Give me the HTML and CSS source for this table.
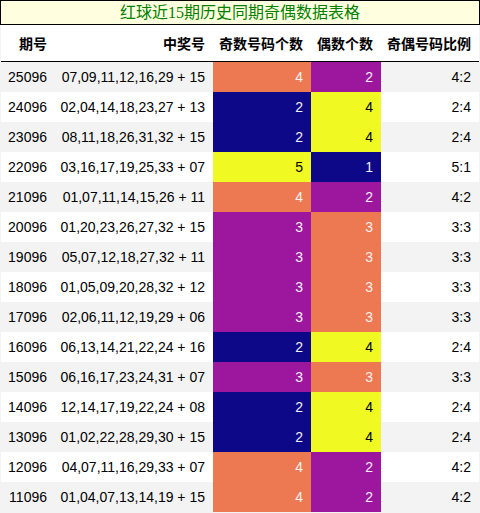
FILE: index.html
```html
<!DOCTYPE html>
<html lang="zh">
<head>
  <meta charset="UTF-8" />
  <title>红球近15期历史同期奇偶数据表格</title>
  <link rel="stylesheet" href="styles.css">
</head>
<body>
  <div class="caption">红球近15期历史同期奇偶数据表格</div>
  <table class="data">
    <thead>
      <tr>
        <th class="c-issue">期号</th>
        <th class="c-nums">中奖号</th>
        <th class="c-odd">奇数号码个数</th>
        <th class="c-even">偶数个数</th>
        <th class="c-ratio">奇偶号码比例</th>
      </tr>
    </thead>
    <tbody>
      <tr><td>25096</td><td>07,09,11,12,16,29 + 15</td><td class="orange">4</td><td class="purple">2</td><td>4:2</td></tr>
      <tr><td>24096</td><td>02,04,14,18,23,27 + 13</td><td class="navy">2</td><td class="yellow">4</td><td>2:4</td></tr>
      <tr><td>23096</td><td>08,11,18,26,31,32 + 15</td><td class="navy">2</td><td class="yellow">4</td><td>2:4</td></tr>
      <tr><td>22096</td><td>03,16,17,19,25,33 + 07</td><td class="yellow">5</td><td class="navy">1</td><td>5:1</td></tr>
      <tr><td>21096</td><td>01,07,11,14,15,26 + 11</td><td class="orange">4</td><td class="purple">2</td><td>4:2</td></tr>
      <tr><td>20096</td><td>01,20,23,26,27,32 + 15</td><td class="purple">3</td><td class="orange">3</td><td>3:3</td></tr>
      <tr><td>19096</td><td>05,07,12,18,27,32 + 11</td><td class="purple">3</td><td class="orange">3</td><td>3:3</td></tr>
      <tr><td>18096</td><td>01,05,09,20,28,32 + 12</td><td class="purple">3</td><td class="orange">3</td><td>3:3</td></tr>
      <tr><td>17096</td><td>02,06,11,12,19,29 + 06</td><td class="purple">3</td><td class="orange">3</td><td>3:3</td></tr>
      <tr><td>16096</td><td>06,13,14,21,22,24 + 16</td><td class="navy">2</td><td class="yellow">4</td><td>2:4</td></tr>
      <tr><td>15096</td><td>06,16,17,23,24,31 + 07</td><td class="purple">3</td><td class="orange">3</td><td>3:3</td></tr>
      <tr><td>14096</td><td>12,14,17,19,22,24 + 08</td><td class="navy">2</td><td class="yellow">4</td><td>2:4</td></tr>
      <tr><td>13096</td><td>01,02,22,28,29,30 + 15</td><td class="navy">2</td><td class="yellow">4</td><td>2:4</td></tr>
      <tr><td>12096</td><td>04,07,11,16,29,33 + 07</td><td class="orange">4</td><td class="purple">2</td><td>4:2</td></tr>
      <tr><td>11096</td><td>01,04,07,13,14,19 + 15</td><td class="orange">4</td><td class="purple">2</td><td>4:2</td></tr>
    </tbody>
  </table>
</body>
</html>
```

FILE: styles.css
```css
body {
  margin: 0;
  background: #f3f3f3;
  font-family: "Liberation Sans", Arial, "Noto Sans CJK SC", sans-serif;
  color: #000;
}
.caption {
  height: 23px;
  line-height: 23px;
  border: 1px solid #000;
  background: #ffffe0;
  color: #008000;
  text-align: center;
  font-family: "Liberation Serif", "Noto Sans CJK SC", serif;
  font-size: 16px;
}
.data {
  border-collapse: collapse;
  table-layout: fixed;
  margin-left: 1px;
  width: 478px;
  font-size: 14px;
}
.data th {
  background: #fff;
  height: 36px;
  padding: 0 8px 0 0;
  text-align: right;
  font-weight: bold;
  font-family: "Noto Sans CJK SC", sans-serif;
  border-bottom: 1px solid #000;
}
.data td {
  height: 30px;
  padding: 0 8px 0 0;
  text-align: right;
}
.data tbody tr:nth-child(odd) {
  background: #f3f3f3;
}
.data tbody tr:nth-child(even) {
  background: #fff;
}
.c-issue { width: 46px; }
.c-nums { width: 150px; }
.c-odd { width: 90px; }
.c-even { width: 62px; }
.c-ratio { width: 90px; }
.data td.orange { background: #ed7953; color: #f1f1f1; }
.data td.purple { background: #9c179e; color: #f1f1f1; }
.data td.navy { background: #0d0887; color: #f1f1f1; }
.data td.yellow { background: #f0f921; color: #000; }
```
